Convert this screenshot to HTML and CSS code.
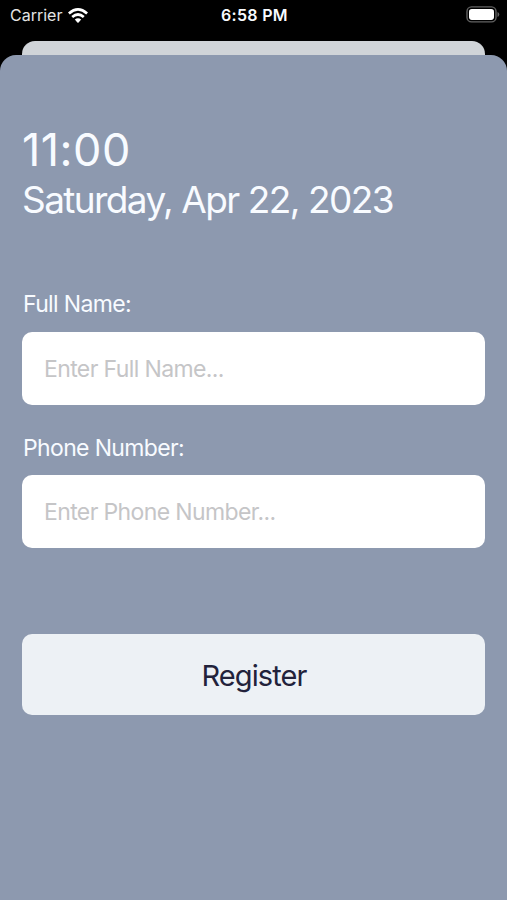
FILE: index.html
```html
<!DOCTYPE html>
<html lang="en">
<head>
<meta charset="utf-8">
<title>Register</title>
<link rel="stylesheet" href="styles.css">
</head>
<body>
<header class="status">
  <div class="carrier"><span class="carrier-name">Carrier</span>
    <svg class="wifi" viewBox="0 0 20 15" width="20" height="15"><g fill="none" stroke="#fff" stroke-width="2.7"><path d="M.9 5.5Q10-2.6 19.1 5.5"/><path d="M4.2 9Q10 4 15.8 9"/></g><path fill="#fff" d="M6.8 11.6Q10 9 13.2 11.6L10.6 14.4Q10 15 9.4 14.4Z"/></svg>
  </div>
  <span class="clock">6:58 PM</span>
  <svg class="battery" viewBox="0 0 34 17" width="34" height="17"><rect x="1" y=".9" width="29" height="15" rx="4.5" fill="none" stroke="#626262" stroke-width="1.4"/><rect x="3" y="2.9" width="25" height="11" rx="2.8" fill="#fff"/><path d="M31.5 5.9q1.8.6 1.8 2.5t-1.8 2.5z" fill="#626262"/></svg>
</header>
<div class="back-card"></div>
<main class="sheet">
  <h1 class="time">11:00</h1>
  <p class="date">Saturday, Apr 22, 2023</p>
  <form class="form">
    <label class="label" for="name">Full Name:</label>
    <input class="field" id="name" type="text" placeholder="Enter Full Name...">
    <label class="label" for="phone">Phone Number:</label>
    <input class="field" id="phone" type="tel" placeholder="Enter Phone Number...">
    <button class="register" type="button">Register</button>
  </form>
</main>
</body>
</html>
```
FILE: styles.css
```css
* { box-sizing: border-box; }
body { margin: 0; height: 900px; overflow: hidden; background: #000; color: #f8fbff; font-family: Inter, "Liberation Sans", sans-serif; display: flex; flex-direction: column; }
.status { height: 41px; padding: 6px 7px 0 10px; display: grid; grid-template-columns: 1fr auto 1fr; align-items: start; }
.carrier { display: flex; gap: 6px; height: 18px; align-items: center; }
.carrier-name { font-size: 16px; line-height: 18px; color: #e4e4e4; }
.clock { font-size: 16px; line-height: 18px; font-weight: 600; letter-spacing: .3px; margin-left: -1px; }
.battery { justify-self: end; }
.back-card { flex: none; height: 30px; margin: 0 22px -16px; border-radius: 13px 13px 0 0; background: #d0d4d8; }
.sheet { position: relative; flex: 1; padding: 67px 22px 0; border-radius: 16px 16px 0 0; background: #8d99af; }
.time, .date { margin: 0; font-weight: 400; white-space: nowrap; }
.time { font-size: 45px; line-height: 55px; letter-spacing: .5px; }
.date { font-size: 37px; line-height: 46px; letter-spacing: -1.6px; word-spacing: .4px; }
.form { display: flex; flex-direction: column; margin-top: 67px; }
.label { height: 42px; padding-left: 1px; font-size: 23px; line-height: 28px; letter-spacing: -.65px; }
.field { height: 73px; padding: 0 22px; border: 0; border-radius: 10px; background: #fff; font: 400 23px/28px Inter, sans-serif; letter-spacing: -.62px; margin-bottom: 28px; }
.field + .label { height: 41px; margin-top: 1px; }
.field::placeholder { color: #c5c5c7; opacity: 1; }
.register { margin-top: 58px; height: 81px; padding: 2px 0 0 1px; border: 0; border-radius: 10px; background: #edf1f5; color: #22223b; font: 400 29px/35px Inter, sans-serif; letter-spacing: -.9px; }
```
